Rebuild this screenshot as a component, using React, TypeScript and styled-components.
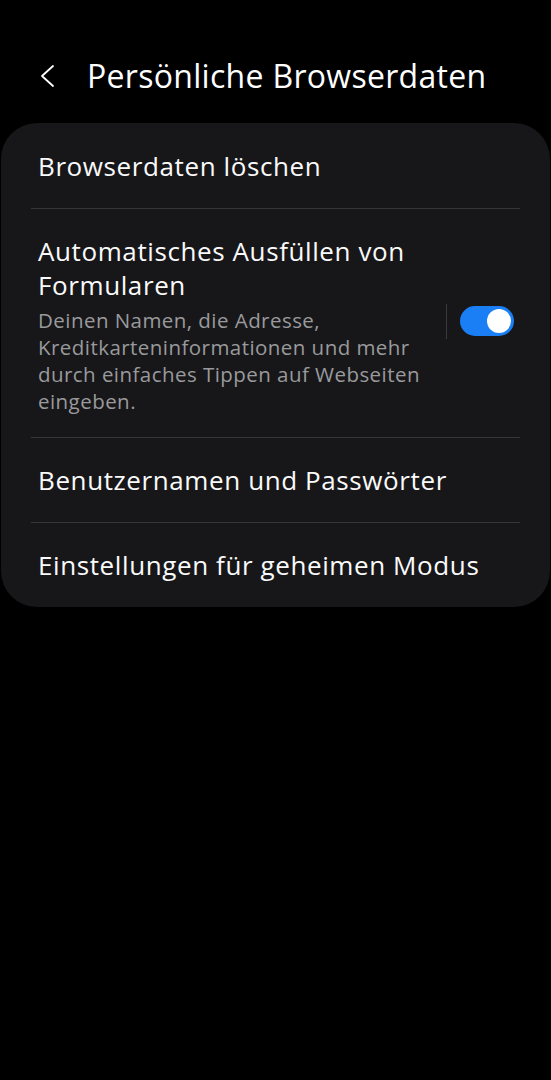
import React from "react";
import styled, { createGlobalStyle } from "styled-components";

const Global = createGlobalStyle`
  html, body { margin: 0; padding: 0; background: #000; }
  body { font-family: "Open Sans", "Noto Sans", sans-serif; color: #fff; }
  * { box-sizing: border-box; }
`;

const Page = styled.div`
  width: 551px;
  min-height: 1080px;
  background: #000;
`;

const Header = styled.header`
  height: 123px;
  display: flex;
  align-items: center;
  padding: 28px 0 0 38px;
  gap: 31px;
`;

const BackButton = styled.button`
  background: none;
  border: 0;
  padding: 0;
  width: 18px;
  height: 24px;
  display: flex;
  align-items: center;
  justify-content: center;
  color: #fff;
`;

const Title = styled.h1`
  margin: 0;
  font-size: 32px;
  font-weight: 400;
  letter-spacing: 0.3px;
  color: #fff;
`;

const Card = styled.section`
  margin: 0 1px;
  background: #17171a;
  border-radius: 36px;
  padding: 0 30px;
`;

const Row = styled.div<{ $tall?: boolean }>`
  display: flex;
  align-items: center;
  min-height: 85px;
  padding: ${(p) => (p.$tall ? "25px 6px 22px 7px" : "0 6px 0 7px")};
  & + & { border-top: 1px solid #363639; }
`;

const TextBlock = styled.div`
  flex: 1;
  min-width: 0;
`;

const RowTitle = styled.div`
  font-size: 26px;
  line-height: 34px;
  color: #fafafa;
  letter-spacing: 0.6px;
`;

const RowSub = styled.div`
  margin-top: 5px;
  font-size: 20.5px;
  line-height: 27px;
  color: #9a9a9c;
  letter-spacing: 0.45px;
  padding-right: 10px;
`;

const SwitchArea = styled.div`
  display: flex;
  align-items: center;
  gap: 13px;
  align-self: center;
  margin-top: -7px;
`;

const VDivider = styled.div`
  width: 1px;
  height: 35px;
  background: #3a3a3d;
`;

const Toggle = styled.div<{ $on: boolean }>`
  width: 54px;
  height: 30px;
  border-radius: 15px;
  background: ${(p) => (p.$on ? "#1a7ff5" : "#555")};
  display: flex;
  align-items: center;
  justify-content: ${(p) => (p.$on ? "flex-end" : "flex-start")};
  padding: 0 3px;
`;

const Knob = styled.div`
  width: 24px;
  height: 24px;
  border-radius: 50%;
  background: #fff;
`;

export default function App() {
  return (
    <Page>
      <Global />
      <Header>
        <BackButton aria-label="Zurück">
          <svg width="18" height="24" viewBox="0 0 18 24" fill="none">
            <path d="M15 2 L4 12 L15 22" stroke="#fff" strokeWidth="1.8" strokeLinecap="round" strokeLinejoin="round" />
          </svg>
        </BackButton>
        <Title>Persönliche Browserdaten</Title>
      </Header>
      <Card>
        <Row>
          <RowTitle>Browserdaten löschen</RowTitle>
        </Row>
        <Row $tall>
          <TextBlock>
            <RowTitle>Automatisches Ausfüllen von Formularen</RowTitle>
            <RowSub>
              Deinen Namen, die Adresse, Kreditkarteninformationen und mehr durch einfaches Tippen auf Webseiten eingeben.
            </RowSub>
          </TextBlock>
          <SwitchArea>
            <VDivider />
            <Toggle $on>
              <Knob />
            </Toggle>
          </SwitchArea>
        </Row>
        <Row>
          <RowTitle>Benutzernamen und Passwörter</RowTitle>
        </Row>
        <Row>
          <RowTitle>Einstellungen für geheimen Modus</RowTitle>
        </Row>
      </Card>
    </Page>
  );
}
